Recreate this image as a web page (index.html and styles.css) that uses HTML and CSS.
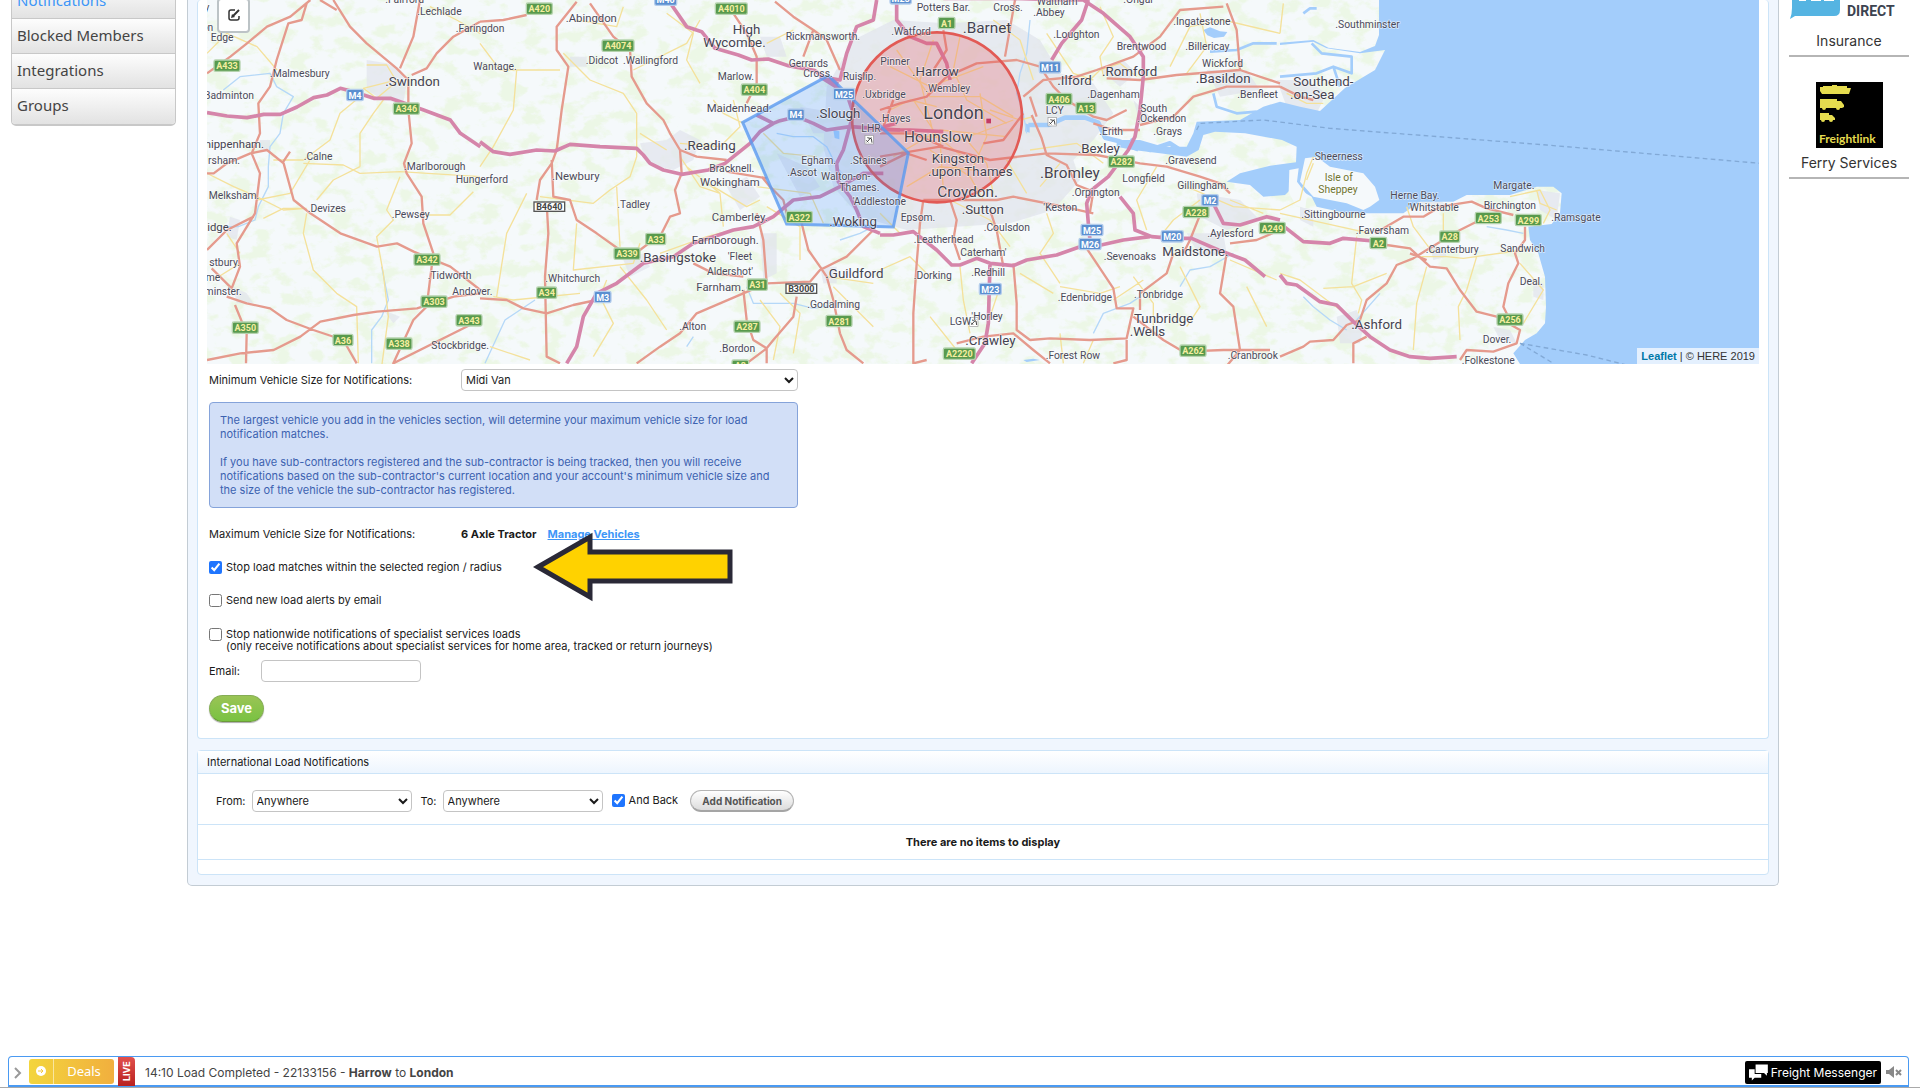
FILE: index.html
```html
<!DOCTYPE html>
<html lang="en">

<head>
	<meta charset="utf-8">
	<title>Notifications</title>
	<link rel="stylesheet" href="styles.css">
</head>

<body>
	<div class="page">
		<nav class="side">
			<a href="#" class="active">Notifications</a>
			<a href="#">Blocked Members</a>
			<a href="#">Integrations</a>
			<a href="#">Groups</a>
		</nav>

		<main class="panel">
			<section class="box first">
				<div class="map">
					<svg class="mapsvg" viewBox="621 0 4656 1092" preserveAspectRatio="xMidYMid slice">
						<defs>
							<filter id="woods" x="0" y="0" width="100%" height="100%">
								<feTurbulence type="fractalNoise" baseFrequency="0.016 0.024" numOctaves="5" seed="8" />
								<feColorMatrix values="0 0 0 0 0.84  0 0 0 0 0.93  0 0 0 0 0.79  0 6 0 0 -2.9" />
							</filter>
						</defs>
						<rect x="621" y="0" width="4656" height="1092" fill="#f5f9fb" />
						<rect x="621" y="0" width="4656" height="1092" filter="url(#woods)" />

						<!-- towns -->
						<g class="urban">
							<path d="M1100 180l60 10 40 20 20 40-10 60-60-10-50-30zM690 650l30 10-10 60-30-10zM700 860l40 20 20 30-50 0zM780 420l30 0 0 30-30 0zM1150 930l50 20-20 20z" />
							<path d="M1920 430l80-10 40-30 60 30-20 60-60 30-80-20zM1710 170l50 0 0 30-50 0zM1870 780l60-20 20 40-60 30zM2180 560l60-30 40 60-60 40zM2280 700l50 0 0 120-40 20zM2330 460l90 40 40 60-60 30zM2400 320l120 20 40 60-120 0zM2460 800l50 0 0 50-40 0zM2280 110l60 0 20 60-60 0z" />
							<path d="M2560 120l120-60 160 10 180-10 100 60 60 100 100 30 60 90-60 80-60 60 20 60-80 90-130 40-160 10-150 10-140-40-80-90-30-120 10-180z" />
							<path d="M3300 210l70-30 40 40-50 40zM3620 210l120 0 40 60-120 20zM3590 580l130 20 60 60-100 30-80-40zM3560 700l110 0 10 60-80 10zM3830 240l90 0 60 40-30 60-90-20zM3400 300l60 60-40 10z" />
							<path d="M4010 950l60-20 20 50-10 50-60 0zM4290 740l40 0 10 30-40 10zM4610 570l70 10-10 80-50-30zM4480 980l50 10 20 40-50-10zM3900 620l40 10 0 50-40-20zM4600 850l30 0 0 50-30-10zM4250 600l60-5 30 20-70 10zM3920 490l70 10-20 40-50-20z" />
						</g>

						<!-- sea, islands and rivers -->
						<path class="sea" d="M5280 0V1092H4560L4540 1060 4575 1020 4610 1000 4635 970 4638 920 4635 830 4615 760 4590 720 4585 680 4655 672 4680 640 4685 580 4660 560 4610 560 4530 585 4400 585 4360 605 4260 605 4210 640 4040 640 3950 620 3935 590 3900 570 3880 560 3855 585 3790 590 3750 555 3680 545 3720 520 3810 497 3888 487 3890 440 3846 420 3735 400 3645 395 3610 405 3596 450 3560 470 3480 460 3400 450 3350 440 3350 420 3420 420 3490 440 3560 440 3580 400 3590 365 3720 360 3790 320 3840 305 3900 320 3960 333 4035 264 4125 210 4155 150 4080 160 3980 145 3940 125 3840 135 3840 128 3940 120 3985 143 4080 156 4125 138 4137 105V0z" />
						<path class="land" d="M3915 475l35-5 40 30 100 20 35 40 13 40-28 20-20 10-50-20-100-20-40-45zM3868 510l28-5-5 40 30 40-5 40-30-10-20-40z" />
						<path class="river" d="M3840 230l110-10 50-20 55 20 0-50-90-10-30-30M4000 200l20 60M3640 280l10 40 60 20 60-5M3630 155l80-5 50-20 70 0M3910 40l20-15 20 0" />
						<path class="lake" d="M3610 90l20-8 30 12 22 2-10 14-30 4-20-8zM2500 390l18 4 0 24-14-4zM3075 370l14 4 0 24-14-4zM3070 1080l30-4 20 4-40 6z" />
						<path class="thames" d="M3085 375l60 0 50-22 60 0 40 15 20 45 40 10 60 25M3540 450l-30-20-60 20-60-30" />
						<path class="lea" d="M3090 60l-10 100-20 60-10 60 20 60 10 60M670 270l50-40 90-10 20 40 50 30-30 50-10 60-30 40-5 60 0 60-30 60-10 40-50 20-50 0M1145 800l20 100-20 50-30 40 0 100M1455 1090l60-130 90-60M2330 400l50 10 60 0 40 30 30 60 30 40M2240 860l20 50 60 0 60 0 60 15 60-10M2060 1040l20-30M2520 720l60-20 40-20M3280 1000l30-60 80-30 30-20M3540 860l30-50 60-10 70-40M3910 890l30 30 50 40 50 30M4070 960l70-80M4460 680l60 10 50 10" />

						<!-- minor roads -->
						<g class="minor">
							<path d="M621 160l60-60 90 40 60 70M820 480h90l80-60 30-80 60-50M910 490l120 5 50 25 120-5 240 15M1080 500l0-100 40-60 30-40M950 600l50-60 80-40M770 590l80 40 70-5M770 600l100-20 60-100M920 640l-10 60 30 110 70 70 60 40 5 170M1200 530l-40 100 20 30-50 50 20 110 15 130-20 150M621 520l80 40 70 30M1280 645l70 0 70-70M640 840l80-50M1100 195l60 0 30 50-60 50-40-30 80-20M1290 20l80 40 70 40M790 655l60-30 70 0M680 700l40 60" />
							<path transform="translate(1440)" d="M0 130l60 80 50 0-10 120-60 110-40 60M60 210l180 0M290 60l120 20 20-60M250 160l80 80 100 40 40 60 0 130-20 60-60 40-50 40-160-20M460 210l160-80 40-70M600 430l120 10 60-60-20-80M480 400l80 50M410 560l10 180M290 670l-10 140 180-20 20-60M40 890l60 10 200-20M30 1040l120 40M140 580l-60 120-30 190M420 800l80 100 60 90M540 760l140-50 80-20M620 500l100 80 10 100M700 300l30 40 60 30M850 400l60 60 100 10M830 560l160 20 40 90M860 620l100 60 0 100M900 880l60 60-20 120M1040 830l140 20M1060 860l120 120M700 560l100 60 40-20M380 840l-20 50 40 80-60 100M880 1080l20-100-60-80M560 40l80 60-20 80 40 70M860 130l80-40M600 470l60 90 60 20" />
							<path transform="translate(2640)" d="M0 640l60 60M30 200l120 60 160-60M50 150l100 140 150 0 100 60M160 120l-40 120 40 160 100 80M240 110l-20 100 40 90 120 70M300 280l20 130-40 90M100 300l80 120 10 150M60 400l180 20 160-60M330 330l90 30 40-10M150 450l120 80 40 70M260 420l60 70 20 90M80 560l100-60 100 10M380 480l60 100M450 450l140-20 80 60M480 560l60-70M660 20l40 90-40 60 10 60M620 250l40-40 60-20 50 40M960 40l20 100-60 80M870 200l60-120 100-20 170 40M500 640l20 60-40 60 60 90M540 860l120 20 60-20M420 820l100 60M360 860l-40 120M240 800l10 100 20 100M700 900l90-60M760 830l60 80 0 90M900 800l60 120-40 60M1050 780l140 60M1100 860l60 120M960 600l-80 60-40 50M830 500l-60 100 30 90M1050 600l100 40M920 560l140 60 140 10M540 1000l10 90M640 1020l-30 70M150 830l-60-60-90 40M150 950l80 100M30 330l60-30 80 20M340 60l80 60 40 120M500 100l80 120 60 20M40 470l140-80 200 20M210 600l120 60 60 80" />
							<path transform="translate(3840)" d="M0 630l60-30 20-80 20-50M0 640l270 60M230 710l-15 140 30 50-10 40M380 620l20 60 60 80M420 770l80 0 50 5 180-25M590 770l-30 100-25 50 5 100M440 800l-30 110-10 140M0 820l60 20 80 60 70 50M130 865l90-5 100-40M490 640v60M690 590l90-20 30 60-20 40M770 570l10 40 50 20M720 790l70 80-60 100M0 100l10-90M20 280l60 30 50 0M100 490l-20 50" />
						</g>

						<!-- A roads -->
						<g class="aroad">
							<path d="M621 220l70-50 50-40 60-50 70-30 60-50M1000 0l50 80 50 50 90 75 35 35v90l10 100-23 60 8 30 45 70 5 80 30 90M960 0l50 30M1260 0l-20 110-40 95M1235 225l45-20 30-45 50-50 80-45M920 10l-15 50-40 10-35 110-20 80-35 50 5 90-25 60 25 60-15 120-55 90 10 70-25 65-60-60M621 520l20 0 40-30 70-30 50-10 50 40 30 110 50 40 90 60 110 40 60-10 50 25 110 45 90 70M621 750l60-60 80-40M680 890l60 20 70 15 50 35 80 30 90 30 40 70M621 1080l100-20 100-10 80-40 60-45 100-20 70-10 120-10 110-35 80-10M705 915l35 85-2 90M1300 760l-20 160-40 40-60 130 260-130M870 455l-20 30" />
							<path transform="translate(1440)" d="M0 65l70-5 70-15M290 5l-60 75v70l35 50-20 130-15 120-15 40-35 50-10 60M215 480l5 110 50 10 20 60 60 40 70 50h60l65-50 25-50 30-10-15-70 20-50-5-70-30-50-20-40-50-50-45-80-5-80-50-40-70-100M200 610l5 90-10 130 5 240 40 20M0 895l80 5 50 25 70 15 80-25 70-15M470 1090l70-50 60-40 50-60 140-60 70-30 130-5 30-35 80-40 80-80M860 850l-10-130-20-80M790 870l10 90 20 60 40 25-60 45M950 890l-10 60-60 70-20 25 0 45M960 650l25 100 35 50 20 30 20 70 20 100 20 50 50 40M885 5l55 45 60 40 40 30 40 90M760 40l40 60 30 70v80l-30 60M640 790l60 30 90 10M845 530l25 30 40 40 10 40M600 450l50 20 90 10M1000 90l-30 80M740 515l120 20" />
							<path transform="translate(2640)" d="M190 90l10 60-40 60M0 330l60-20 80-20 60-60 90-40 120-10 70 20 40 60 40 40 80 50 40 10 60-30M430 290l60-50 100-10 60-20 110-40 80-60 60-80 130-10M680 235l100 5 110-15 190-15 120 40M1040 10l30 80 10 120M780 375l100-25 60-60 100-30 160 0M470 350l-20-60M455 345l30 70 15 50 60 30 30 60 50 20-10 60M0 470l180-30 150 40 170-20 150 5 130 25 80 10 100 30 60 20 30 30M640 370l60 20 80 0M130 600l-10 70-10 120-10 150 0 150 40-10M130 600l80 0 20 60-10 60 20 60M230 600l120 0 50-10 150 30 90 20M330 630l20 60 20 110M400 790l10 120 0 80 40 30M450 1020l60-5 120 5 110-5 20-90-50 0-10-60-40-60-40-60M230 1030l80-20 90-10 60 50 50 40M740 1020l0 60-40 10M780 930l0-50 80-60 20-60M760 950l90 70 60 35 120-5 140 0M1040 760l-20 120 40 40 20 130-50 60M970 620l-40 100-20 40M1050 730l80-10 70-30M0 500l80-40 60 20M310 430l60-10 60-80M40 300l-30 80M405 0l-30 170M0 400l100 0 90 40" />
							<path transform="translate(3840)" d="M0 1070l70-30 20-15 70-5 40-45 40-15 20-60 60-50 30-55 50-20 40-25 100-60 60-30M320 735l70 10 60 55 50 5 40 65 50 65 60 15 70 40-10 40-70 25-80-5-20 30M735 680v40l-30 40 10 30-30 60-15 70 20 40M285 700l85-50 60 0 50-30 95-15 45 20 80 20M220 1090v-60l40-20M0 260l60 30 40 10M390 760l50 20" />
						</g>

						<!-- motorways -->
						<g class="mway">
							<path d="M621 338l60 10 60 5 50-10 50 0 50-22 50-28 40-8 40-20 40 10 60 20 50 0 100 35 80 30 30 40 60 40" />
							<path transform="translate(1440)" d="M0 425l40 30 50 8 80-13 55 3 45-20 90 7 110 5 20 20 20 25 40 20 55 13 80-13 50-20 75-60 30-35 40-25 20-8 50-12 50 20 40 20 70-10 150 10M575 15l45 65 45 15 40 50 70 20 40 15 50-3 60 20 80 15 40 30 30 10M1190 0l-10 60-50 20-30 80-20 80-60-10M830 345l50 25M1020 230l80 50 20 60-30 110-20 40 5 55 35 45 20 40 20 50 50 20M260 1090l30-50 20-90 40-70 60-30 80-60 90-20 60-40 60-20 60-20 60-10 60-30 60-50 80-10 60-30 70-40 60 0" />
							<path transform="translate(2640)" d="M0 705l40 0 60-10 70 55 45 45h25l50-20 40 15 70 7 40-17 90-15 70-25 30-20-5-50-5-60 15-40 50-40 60-80 20-40 15-80 10-100v-60l-40-60-80-70-60-40-60 0-160-5-140 0-60 0M50 0v60l40 50 50 20 30 0 30 60 10 50M625 0l-20 60-60 70-30 50M330 790l-5 180-10 60-40 60M720 590l40 50 5 50 50 20 60 5 60 0 80 35 80 30 60 50M640 740l90-20 80-10M990 590l40 80 50 5 80-25 40 10M10 390l80 0 100 5M10 380l40-10" />
							<path transform="translate(3840)" d="M0 670l70 55 80 5 40-15 90 8M0 825l20 25 30 5 70 50 50 10 50 50 50 45 60 40 60 20 60 5 80-5" />
						</g>

						<path class="ferry" d="M3590 390l10-20 190-10 200 25 650 50 640 55M4560 1030l200 35 200 50M4560 1030l100 60" />

						<!-- saved areas -->
						<circle cx="2811" cy="352" r="255" fill="#e8303c" fill-opacity=".22" stroke="#e25a55" stroke-width="8" />
						<path d="M2485 227L2228 367 2360 672 2680 681 2725 459z" fill="#38f" fill-opacity=".2" stroke="#5a9af0" stroke-opacity=".8" stroke-width="9" />

						<!-- road shields -->
						<g class="shield">
							<g class="green">
								<rect x="642" y="180" width="78" height="34" rx="5" /><text x="681" y="208">A433</text>
								<rect x="1180" y="309" width="78" height="34" rx="5" /><text x="1219" y="337">A346</text>
								<rect x="1242" y="762" width="78" height="34" rx="5" /><text x="1281" y="790">A342</text>
								<rect x="1263" y="888" width="78" height="34" rx="5" /><text x="1302" y="916">A303</text>
								<rect x="1368" y="944" width="78" height="34" rx="5" /><text x="1407" y="972">A343</text>
								<rect x="697" y="966" width="78" height="34" rx="5" /><text x="736" y="994">A350</text>
								<rect x="999" y="1003" width="60" height="34" rx="5" /><text x="1029" y="1031">A36</text>
								<rect x="1158" y="1014" width="78" height="34" rx="5" /><text x="1197" y="1042">A338</text>
								<rect x="1579" y="9" width="78" height="34" rx="5" /><text x="1618" y="37">A420</text>
								<rect x="1806" y="120" width="96" height="34" rx="5" /><text x="1854" y="148">A4074</text>
								<rect x="2146" y="9" width="96" height="34" rx="5" /><text x="2194" y="37">A4010</text>
								<rect x="2224" y="252" width="78" height="34" rx="5" /><text x="2263" y="280">A404</text>
								<rect x="2359" y="634" width="78" height="34" rx="5" /><text x="2398" y="662">A322</text>
								<rect x="1937" y="700" width="60" height="34" rx="5" /><text x="1967" y="728">A33</text>
								<rect x="1842" y="744" width="78" height="34" rx="5" /><text x="1881" y="772">A339</text>
								<rect x="1610" y="861" width="60" height="34" rx="5" /><text x="1640" y="889">A34</text>
								<rect x="2242" y="837" width="60" height="34" rx="5" /><text x="2272" y="865">A31</text>
								<rect x="2202" y="963" width="78" height="34" rx="5" /><text x="2241" y="991">A287</text>
								<rect x="2478" y="946" width="78" height="34" rx="5" /><text x="2517" y="974">A281</text>
								<rect x="2196" y="1080" width="50" height="34" rx="5" /><text x="2221" y="1108">A3</text>
								<rect x="2815" y="52" width="50" height="34" rx="5" /><text x="2840" y="80">A1</text>
								<rect x="3138" y="280" width="78" height="34" rx="5" /><text x="3177" y="308">A406</text>
								<rect x="3228" y="307" width="60" height="34" rx="5" /><text x="3258" y="335">A13</text>
								<rect x="3325" y="468" width="78" height="34" rx="5" /><text x="3364" y="496">A282</text>
								<rect x="3549" y="619" width="78" height="34" rx="5" /><text x="3588" y="647">A228</text>
								<rect x="3778" y="667" width="78" height="34" rx="5" /><text x="3817" y="695">A249</text>
								<rect x="2830" y="1044" width="96" height="34" rx="5" /><text x="2878" y="1072">A2220</text>
								<rect x="3540" y="1035" width="78" height="34" rx="5" /><text x="3579" y="1063">A262</text>
								<rect x="4110" y="712" width="50" height="34" rx="5" /><text x="4135" y="740">A2</text>
								<rect x="4319" y="693" width="60" height="34" rx="5" /><text x="4349" y="721">A28</text>
								<rect x="4426" y="637" width="78" height="34" rx="5" /><text x="4465" y="665">A253</text>
								<rect x="4546" y="643" width="78" height="34" rx="5" /><text x="4585" y="671">A299</text>
								<rect x="4491" y="942" width="78" height="34" rx="5" /><text x="4530" y="970">A256</text>
							</g>
							<g class="blue">
								<rect x="1040" y="268" width="50" height="34" rx="5" /><text x="1065" y="296">M4</text>
								<rect x="1964" y="-18" width="66" height="34" rx="5" /><text x="1997" y="10">M40</text>
								<rect x="2363" y="327" width="50" height="34" rx="5" /><text x="2388" y="355">M4</text>
								<rect x="2500" y="265" width="64" height="34" rx="5" /><text x="2532" y="293">M25</text>
								<rect x="1783" y="874" width="50" height="34" rx="5" /><text x="1808" y="902">M3</text>
								<rect x="2670" y="-22" width="64" height="34" rx="5" /><text x="2702" y="6">M25</text>
								<rect x="3118" y="185" width="64" height="34" rx="5" /><text x="3150" y="213">M11</text>
								<rect x="3243" y="673" width="66" height="34" rx="5" /><text x="3276" y="701">M25</text>
								<rect x="3237" y="715" width="66" height="34" rx="5" /><text x="3270" y="743">M26</text>
								<rect x="3484" y="692" width="66" height="34" rx="5" /><text x="3517" y="720">M20</text>
								<rect x="3605" y="584" width="50" height="34" rx="5" /><text x="3630" y="612">M2</text>
								<rect x="2938" y="850" width="66" height="34" rx="5" /><text x="2971" y="878">M23</text>
							</g>
							<g class="white">
								<rect x="1602" y="606" width="92" height="28" /><text x="1648" y="630">B4640</text>
								<rect x="2358" y="852" width="92" height="28" /><text x="2404" y="876">B3000</text>
							</g>
						</g>

						<!-- airports -->
						<g class="airport">
							<rect x="2595" y="406" width="25" height="26" /><path d="M2600 427l14-15M2602 413l12 3 2 12M2599 421l6 6" />
							<rect x="3144" y="352" width="25" height="26" /><path d="M3149 373l14-15M3151 359l12 3 2 12M3148 367l6 6" />
							<rect x="2909" y="953" width="25" height="26" /><path d="M2914 974l14-15M2916 960l12 3 2 12M2913 968l6 6" />
						</g>
						<rect x="2959" y="356" width="14" height="14" fill="#c43a62" />

						<!-- place names -->
						<g class="names">
							<text x="1156" y="8">.Fairford</text><text x="1252" y="44">.Lechlade</text><text x="1367" y="95">.Faringdon</text>
							<text x="628" y="34" class="end">y</text><text x="640" y="93" class="end">on</text><text x="632" y="123">Edge</text>
							<text x="810" y="231">.Malmesbury</text><text x="762" y="296" class="end">Badminton</text>
							<text x="911" y="479">.Calne</text><text x="720" y="492" class="end">rsham.</text><text x="1212" y="509">.Marlborough</text>
							<text x="1367" y="549">Hungerford</text><text x="626" y="597">Melksham.</text><text x="923" y="635">.Devizes</text>
							<text x="1175" y="654">.Pewsey</text><text x="720" y="797" class="end">stbury.</text><text x="661" y="844" class="end">me</text>
							<text x="725" y="884" class="end">minster.</text><text x="1283" y="836">.Tidworth</text><text x="1357" y="884">Andover.</text>
							<text x="1294" y="1046">Stockbridge.</text>
							<text x="1697" y="65" class="t11">.Abingdon</text><text x="1757" y="192">.Didcot</text><text x="1869" y="192">.Wallingford</text>
							<text x="1420" y="210">Wantage.</text><text x="2153" y="240">Marlow.</text><text x="2366" y="200">Gerrards</text>
							<text x="2410" y="230">Cross.</text><text x="2357" y="121">Rickmansworth.</text><text x="2528" y="239">Ruislip.</text>
							<text x="1656" y="539" class="t11">.Newbury</text><text x="1852" y="624">.Tadley</text><text x="2120" y="335" class="t11">Maidenhead.</text>
							<text x="2128" y="517">Bracknell.</text><text x="2100" y="559" class="t11">Wokingham</text><text x="2135" y="662" class="t11">Camberley.</text>
							<text x="2075" y="731" class="t11">Farnborough.</text><text x="2183" y="779">'Fleet</text><text x="2121" y="826">Aldershot'</text>
							<text x="2089" y="874" class="t11">Farnham.</text><text x="1636" y="845">.Whitchurch</text><text x="2422" y="923">.Godalming</text>
							<text x="2038" y="989">.Alton</text><text x="2158" y="1055">.Bordon</text><text x="2404" y="492">Egham.</text>
							<text x="2362" y="527">.Ascot</text><text x="2550" y="492">.Staines</text><text x="2463" y="541">Walton-on-</text>
							<text x="2518" y="574">Thames.</text><text x="2558" y="614">'Addlestone</text><text x="2584" y="396">LHR</text>
							<text x="2587" y="295">.Uxbridge</text><text x="2750" y="34">Potters Bar.</text><text x="2980" y="34">Cross.</text>
							<text x="3110" y="16">Waltham</text><text x="3100" y="48">.Abbey</text><text x="3370" y="8">.Ongar</text>
							<text x="2674" y="104">.Watford</text><text x="3160" y="113">.Loughton</text><text x="3520" y="74">.Ingatestone</text>
							<text x="3350" y="149">Brentwood</text><text x="3556" y="151">.Billericay</text><text x="3606" y="200">Wickford</text>
							<text x="2641" y="196">Pinner</text><text x="2776" y="277">.Wembley</text><text x="2638" y="365">.Hayes</text>
							<text x="3262" y="295">.Dagenham</text><text x="3712" y="295">.Benfleet</text><text x="3421" y="335">South</text>
							<text x="3412" y="365">.Ockendon</text><text x="3460" y="404">.Grays</text><text x="3298" y="404">.Erith</text>
							<text x="3137" y="342">LCY</text><text x="3496" y="491">.Gravesend</text><text x="3367" y="545">Longfield</text>
							<text x="3532" y="566">Gillingham.</text><text x="3215" y="587">.Orpington</text><text x="3130" y="632">'Keston</text>
							<text x="2702" y="662">Epsom.</text><text x="2951" y="692">.Coulsdon</text><text x="2741" y="730">.Leatherhead</text>
							<text x="2881" y="767">Caterham'</text><text x="2914" y="827">.Redhill</text><text x="2741" y="837">.Dorking</text>
							<text x="3622" y="710">.Aylesford</text><text x="3311" y="779">.Sevenoaks</text><text x="3173" y="902">.Edenbridge</text>
							<text x="3402" y="893">.Tonbridge</text><text x="2914" y="960">'Horley</text><text x="2849" y="976">LGW</text>
							<text x="3137" y="1077">.Forest Row</text><text x="3683" y="1077">.Cranbrook</text>
							<text x="4006" y="83">.Southminster</text><text x="3936" y="479">.Sheerness</text><text x="4171" y="596">Herne Bay.</text>
							<text x="4224" y="632">'Whitstable</text><text x="4480" y="566">Margate.</text><text x="4451" y="627">Birchington</text>
							<text x="4654" y="663">.Ramsgate</text><text x="3904" y="654">.Sittingbourne</text><text x="4067" y="702">.Faversham</text>
							<text x="4277" y="758">.Canterbury</text><text x="4501" y="755">Sandwich</text><text x="4559" y="854">Deal.</text>
							<text x="4448" y="1028">Dover.</text><text x="4385" y="1092">.Folkestone</text>
							<text x="3974" y="542" class="isle">Isle of</text><text x="3955" y="578" class="isle">Sheppey</text>
						</g>
						<g class="names towns">
							<text x="792" y="443" class="t11 end">hippenham.</text><text x="695" y="692" class="t11 end">idge.</text>
							<text x="1156" y="257">.Swindon</text><text x="2052" y="449">.Reading</text><text x="1919" y="785">.Basingstoke</text>
							<text x="2198" y="101">High</text><text x="2110" y="140">Wycombe.</text><text x="2448" y="354">.Slough</text>
							<text x="2488" y="679">.Woking</text><text x="2476" y="834">.Guildford</text><text x="2736" y="227">.Harrow</text>
							<text x="3172" y="256">.Ilford</text><text x="3306" y="227">.Romford</text><text x="3587" y="249">.Basildon</text>
							<text x="2795" y="489">Kingston</text><text x="2784" y="528">.upon Thames</text><text x="3233" y="459">.Bexley</text>
							<text x="2885" y="641">.Sutton</text><text x="3487" y="767">Maidstone.</text><text x="3402" y="969">Tunbridge</text>
							<text x="3389" y="1007">.Wells</text><text x="2896" y="1035">.Crawley</text><text x="3880" y="257">Southend-</text>
							<text x="3870" y="297">.on-Sea</text><text x="4054" y="987">.Ashford</text>
							<text x="2888" y="99" class="t15">.Barnet</text><text x="2712" y="427" class="t15">Hounslow</text>
							<text x="2812" y="591" class="t15">Croydon.</text><text x="3120" y="535" class="t15">.Bromley</text>
							<text x="2770" y="358" class="t18">London</text>
						</g>
					</svg>
					<button class="edit" aria-label="Edit layers">
						<svg width="14" height="14" viewBox="0 0 14 14" fill="none" stroke="#333" stroke-width="1.5">
							<path d="M8 2H4Q2 2 2 4v6q0 2 2 2h6q2 0 2-2V8" />
							<path d="M6 8L12 2" stroke-width="2" />
							<path d="M4 10l1-4 3 3z" fill="#333" stroke="none" />
						</svg>
					</button>
					<div class="credit"><a href="#">Leaflet</a> | © HERE 2019</div>
				</div>

				<form class="settings">
					<div class="row size">
						<label for="minsize">Minimum Vehicle Size for Notifications:</label>
						<select id="minsize"><option>Midi Van</option></select>
					</div>
					<div class="info">
						<p>The largest vehicle you add in the vehicles section, will determine your maximum vehicle size for load notification matches.</p>
						<p>If you have sub-contractors registered and the sub-contractor is being tracked, then you will receive notifications based on the sub-contractor's current location and your account's minimum vehicle size and the size of the vehicle the sub-contractor has registered.</p>
					</div>
					<div class="row max">
						<span>Maximum Vehicle Size for Notifications:</span>
						<b>6 Axle Tractor</b>
						<a href="#">Manage Vehicles</a>
					</div>
					<div class="row check">
						<input type="checkbox" id="stopregion" checked>
						<label for="stopregion">Stop load matches within the selected region / radius</label>
						<svg class="arrow" width="202" height="72" viewBox="0 0 202 72">
							<path d="M5 36L57 6V21H197V50H57V66z" fill="#ffd200" stroke="#2a2937" stroke-width="5" />
						</svg>
					</div>
					<div class="row check">
						<input type="checkbox" id="byemail">
						<label for="byemail">Send new load alerts by email</label>
					</div>
					<div class="row check two">
						<input type="checkbox" id="nationwide">
						<label for="nationwide">Stop nationwide notifications of specialist services loads<br>(only receive notifications about specialist services for home area, tracked or return journeys)</label>
					</div>
					<div class="row email">
						<label for="email">Email:</label>
						<input type="text" id="email">
					</div>
					<button type="button" class="save">Save</button>
				</form>
			</section>

			<section class="box inter">
				<h2>International Load Notifications</h2>
				<form class="add">
					<label for="from">From:</label>
					<select id="from"><option>Anywhere</option></select>
					<label for="to" class="to">To:</label>
					<select id="to"><option>Anywhere</option></select>
					<span class="back">
						<input type="checkbox" id="back" checked>
						<label for="back">And Back</label>
					</span>
					<button type="button">Add Notification</button>
				</form>
				<div class="empty">There are no items to display</div>
			</section>
		</main>

		<aside class="partners">
			<a href="#" class="partner insurance">
				<svg width="120" height="20" viewBox="0 0 120 20">
					<path d="M3 0H51V10Q51 16 45 16H6L1 19Q3 14 3 8z" fill="#55b4e2" />
					<path d="M10 0h7v1h-7zM22 0h10v1h-10zM35 0h10v1h-10z" fill="#fff" />
					<text x="58" y="16" class="direct">DIRECT</text>
				</svg>
				<span>Insurance</span>
			</a>
			<a href="#" class="partner">
				<svg width="67" height="66" viewBox="0 0 67 66">
					<rect width="67" height="66" />
					<g fill="#e6dc4f">
						<path d="M4 5h3V4h9V3h5v1h10v2h4l-2 6H6L4 9z" />
						<path d="M4 17h17v2h4l3 4v2l-2 1h-2a2 2 0 0 1-4 0H10a2 2 0 0 1-4 0H4z" />
						<path d="M4 31h9v2h3l3 3v2h-2a2 2 0 0 1-4 0H9a2 2 0 0 1-4 0H4z" />
						<text x="3" y="61" class="flink">Freightlink</text>
					</g>
				</svg>
				<span>Ferry Services</span>
			</a>
		</aside>
	</div>

	<footer class="bar">
		<div class="barin">
			<svg class="chev" width="8" height="12" viewBox="0 0 8 12"><path d="M1 1l5 5-5 5" fill="none" stroke="#999" stroke-width="2" /></svg>
			<button class="deals">
				<span class="go"><svg width="10" height="10" viewBox="0 0 10 10"><circle cx="5" cy="5" r="5" fill="#fff" /><path d="M2 5h5M5 3l2 2-2 2" fill="none" stroke="#f3c83f" stroke-width="1" /></svg></span>
				<span class="dl">Deals</span>
			</button>
			<span class="live">LIVE</span>
			<span class="news">14:10 Load Completed - 22133156 - <b>Harrow</b> to <b>London</b></span>
			<button class="msg">
				<svg width="20" height="18" viewBox="0 0 20 18" fill="#fff">
					<path d="M7 1h13v9h-1v3l-3-3H7z" />
					<path d="M0 6h6v5h7v4H6l-3 3v-3H0z" />
				</svg>
				Freight Messenger
			</button>
			<svg class="mute" width="16" height="12" viewBox="0 0 16 12">
				<path d="M0 4h3l5-4v12L3 8H0z" fill="#888" />
				<path d="M10 4l5 5M15 4l-5 5" stroke="#888" stroke-width="2" />
			</svg>
		</div>
	</footer>
</body>

</html>
```
FILE: styles.css
```css
* {
	box-sizing: border-box;
}

body {
	margin: 0;
	background: #fff;
	color: #1a1a1a;
	font-family: Inter, "Liberation Sans", sans-serif;
	font-size: 11px;
	line-height: 14px;
	overflow: hidden;
}

a {
	color: #3d96f7;
}

input,
select,
button {
	font-family: inherit;
	font-size: inherit;
	margin: 0;
}

.page {
	display: grid;
	grid-template-columns: 166px 1fr 120px;
	gap: 10px;
	padding: 0 11px 60px 11px;
	align-items: start;
}

/* left menu, scrolled so that its first item is cut */
.side {
	width: 165px;
	margin-top: -17px;
	border: 1px solid #c8c8c8;
	border-bottom-width: 2px;
	border-radius: 5px;
	overflow: hidden;
}

.side a {
	display: block;
	height: 35px;
	padding: 0 5px;
	line-height: 32px;
	font-family: "Noto Sans", sans-serif;
	font-size: 15px;
	color: #444;
	text-decoration: none;
	background: linear-gradient(#fdfdfd, #e2e2e2);
	border-bottom: 1px solid #c8c8c8;
}

.side a:last-child {
	border-bottom: 0;
}

.side a.active {
	color: #3d96f7;
}

.panel {
	background: #f0f6fe;
	border: 1px solid #c3ccd4;
	border-top: 0;
	border-radius: 0 0 5px 5px;
	padding: 0 9px 10px;
}

.box {
	background: #fff;
	border: 1px solid #cce4f8;
	border-radius: 4px;
}

.first {
	border-top: 0;
	padding: 0 9px 16px;
}

/* map */
.map {
	position: relative;
	height: 364px;
	overflow: hidden;
}

.mapsvg {
	display: block;
	width: 100%;
	height: 100%;
}

.sea,
.lake {
	fill: #a3cdfb;
}

.land {
	fill: #f5f9fb;
}

.urban {
	fill: #e1e4ec;
	opacity: .7;
}

.river,
.thames,
.lea,
.minor,
.aroad,
.mway,
.ferry {
	fill: none;
	stroke-linejoin: round;
}

.river {
	stroke: #a3cdfb;
	stroke-width: 8;
}

.thames {
	stroke: #a3cdfb;
	stroke-width: 14;
}

.lea {
	stroke: #b5d8f8;
	stroke-width: 4;
}

.minor {
	stroke: #f4e19b;
	stroke-width: 4;
}

.aroad {
	stroke: #e59a8d;
	stroke-width: 7;
}

.mway {
	stroke: #d585aa;
	stroke-width: 11;
}

.ferry {
	stroke: #82a9d6;
	stroke-width: 4;
	stroke-dasharray: 14 10;
}

.names {
	font-family: Roboto, "Noto Sans", sans-serif;
	font-size: 31px;
	fill: #4b4a5a;
	stroke: #fff;
	stroke-width: 4px;
	stroke-opacity: .6;
	paint-order: stroke;
}

.names .t11 {
	font-size: 34px;
}

.towns {
	font-size: 40px;
	fill: #444350;
}

.names .t15 {
	font-size: 46px;
}

.names .t18 {
	font-size: 54px;
}

.names .end {
	text-anchor: end;
}

.names .isle {
	fill: #6f7330;
}

.shield {
	font-family: Roboto, sans-serif;
	font-size: 27px;
	font-weight: bold;
	text-anchor: middle;
}

.shield rect {
	stroke-width: 4;
}

.green rect {
	fill: #589a4d;
	stroke: #b5d3ae;
}

.green text {
	fill: #f5eea0;
}

.blue rect {
	fill: #5b8fd0;
	stroke: #b4cdec;
}

.blue text {
	fill: #fff;
}

.white rect {
	fill: #fff;
	stroke: #555;
}

.white text {
	fill: #444;
}

.airport rect {
	fill: #fff;
	stroke: #999;
	stroke-width: 2;
}

.airport path {
	fill: none;
	stroke: #444;
	stroke-width: 3;
}

.edit {
	position: absolute;
	left: 10px;
	top: -2px;
	width: 33px;
	height: 35px;
	padding: 2px 0 0;
	background: #fff;
	border: 2px solid #bcc3c6;
	border-radius: 4px;
}

.credit {
	position: absolute;
	right: 0;
	bottom: 0;
	height: 16px;
	padding: 0 4px;
	line-height: 16px;
	font-family: "Liberation Sans", sans-serif;
	color: #333;
	background: rgba(255, 255, 255, .7);
}

.credit a {
	color: #0078a8;
	font-weight: bold;
	text-decoration: none;
}

/* settings form */
.settings {
	padding: 5px 2px 0;
}

.row {
	display: flex;
	align-items: center;
}

select {
	height: 22px;
	width: 160px;
	padding: 0;
	color: #1a1a1a;
	background-color: #fff;
	border: 1px solid #c4c4c4;
	border-radius: 4px;
}

.size label,
.max span {
	width: 252px;
}

.size select {
	width: 337px;
}

.info {
	width: 589px;
	margin-top: 11px;
	padding: 10px;
	color: #3c62b0;
	background: #d2dff7;
	border: 1px solid #85a3da;
	border-radius: 4px;
}

.info p {
	margin: 0;
}

.info p+p {
	margin-top: 14px;
}

.max {
	margin-top: 19px;
	height: 14px;
}

.max a {
	margin-left: 11px;
	font-weight: bold;
}

input[type=checkbox] {
	width: 13px;
	height: 13px;
	margin-right: 4px;
	accent-color: #1f75fe;
}

.check {
	position: relative;
	height: 14px;
	margin-top: 19px;
}

/* pointer drawn over the option */
.arrow {
	position: absolute;
	left: 324px;
	top: -29px;
}

.two {
	height: 26px;
	margin-top: 21px;
	align-items: start;
	line-height: 12px;
}

.email {
	margin-top: 6px;
}

.email label {
	width: 52px;
}

.email input {
	width: 160px;
	height: 22px;
	border: 1px solid #c4c4c4;
	border-radius: 4px;
}

.save {
	display: block;
	width: 55px;
	height: 27px;
	margin-top: 13px;
	padding: 0 0 2px;
	color: #fff;
	font-size: 13px;
	font-weight: bold;
	background: linear-gradient(#9ac455, #79c242);
	border: 1px solid #85ad55;
	border-bottom-color: #6b9a3a;
	border-radius: 14px;
	box-shadow: 0 1px 1px #aaa;
}

/* international */
.inter {
	margin-top: 11px;
	padding-bottom: 14px;
}

.inter h2 {
	margin: 0;
	padding: 0 9px;
	height: 23px;
	line-height: 22px;
	font-size: 11px;
	font-weight: normal;
	background: linear-gradient(#fff, #edf5fe);
	border-bottom: 1px solid #cce4f8;
}

.add {
	display: flex;
	align-items: center;
	gap: 6px;
	height: 51px;
	padding: 4px 18px 0;
	border-bottom: 1px solid #cce4f8;
}

.add .to {
	margin-left: 3px;
}

.back {
	display: flex;
	align-items: center;
	margin-left: 3px;
	padding-bottom: 2px;
}

.add button {
	height: 22px;
	width: 104px;
	margin-left: 6px;
	padding: 0;
	font-size: 10px;
	font-weight: bold;
	color: #555;
	background: linear-gradient(#fff, #dcdcdc);
	border: 1px solid #b5b5b5;
	border-bottom: 2px solid #a5a5a5;
	border-radius: 11px;
}

.empty {
	height: 35px;
	line-height: 34px;
	text-align: center;
	font-weight: bold;
	border-bottom: 1px solid #cce4f8;
}

/* partners */
.partner {
	display: flex;
	flex-direction: column;
	align-items: center;
	height: 122px;
	padding-top: 25px;
	border-bottom: 2px solid #b5b5b5;
	color: #333;
	font-size: 14px;
	line-height: 30px;
	text-decoration: none;
}

.partner svg {
	flex-shrink: 0;
}

.insurance {
	height: 57px;
	padding-top: 0;
}

.insurance span {
	padding-top: 6px;
}

.direct {
	font-family: Roboto, sans-serif;
	font-size: 14px;
	font-weight: bold;
	fill: #3c4350;
}

.flink {
	font-family: Lato, sans-serif;
	font-size: 12px;
	font-weight: bold;
}

/* ticker */
.bar {
	position: fixed;
	left: 0;
	right: 0;
	bottom: 0;
	padding: 0 11px 0 8px;
	border-bottom: 1px solid #a9a9a9;
}

.barin {
	display: flex;
	align-items: center;
	height: 31px;
	padding: 0 6px 0 5px;
	background: #fff;
	border: 1px solid #4a9af2;
	border-bottom-width: 2px;
	border-radius: 4px 4px 0 0;
}

.chev {
	margin-top: 4px;
}

.deals {
	display: flex;
	width: 85px;
	height: 25px;
	margin-left: 7px;
	padding: 0;
	color: #fff;
	font-family: "Noto Sans", sans-serif;
	font-size: 13px;
	line-height: 24px;
	background: linear-gradient(90deg, #f3d53d, #f1af3e);
	border: 0;
	border-radius: 3px;
}

.go {
	width: 25px;
	height: 25px;
	border-right: 1px solid #f9e6a0;
}

.dl {
	flex: 1;
}

.live {
	width: 17px;
	height: 29px;
	margin: 0 10px 0 4px;
	writing-mode: vertical-rl;
	transform: rotate(180deg);
	text-align: center;
	line-height: 17px;
	font-size: 9px;
	font-weight: bold;
	color: #fff;
	background: linear-gradient(#b8211f, #e2504c);
	border-radius: 0 0 0 4px;
}

.news {
	flex: 1;
	padding-top: 4px;
	font-size: 12px;
	color: #444;
}

.msg {
	display: flex;
	align-items: center;
	gap: 3px;
	width: 136px;
	height: 23px;
	margin: 2px 5px 0 0;
	padding: 0 4px;
	color: #fff;
	font-size: 12px;
	background: #000;
	border: 0;
	border-radius: 2px;
	white-space: nowrap;
}

.mute {
	margin-top: 2px;
}
```
